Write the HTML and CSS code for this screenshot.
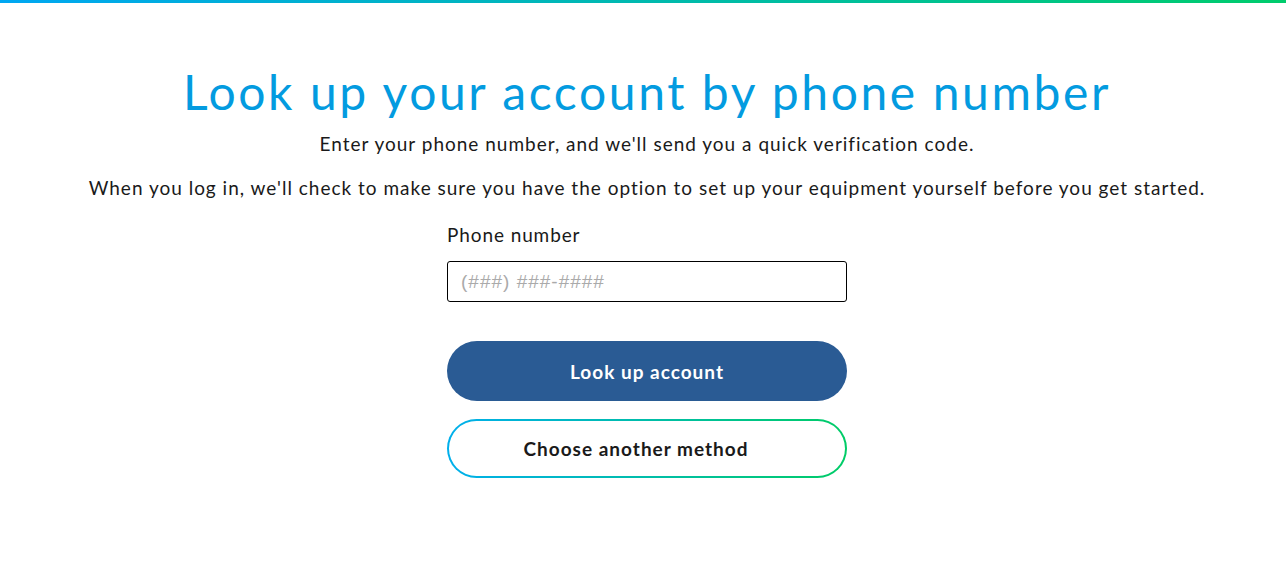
FILE: index.html
```html
<!DOCTYPE html>
<html lang="en">
<head>
    <meta charset="UTF-8">
    <meta name="viewport" content="width=device-width, initial-scale=1.0">
    <title>Look up your account</title>
    <link rel="stylesheet" href="styles.css">
</head>
<body>
    <div class="top-bar"></div>
    <main class="lookup">
        <h1>Look up your account by phone number</h1>
        <p>Enter your phone number, and we'll send you a quick verification code.</p>
        <p>When you log in, we'll check to make sure you have the option to set up your equipment yourself before you get started.</p>
        <form class="lookup-form" onsubmit="return false">
            <label for="phone">Phone number</label>
            <input type="tel" id="phone" name="phone" placeholder="(###) ###-####">
            <button type="submit" class="btn-primary">Look up account</button>
            <button type="button" class="btn-outline"><span>Choose another method</span></button>
        </form>
    </main>
</body>
</html>
```

FILE: styles.css
```css
body {
    margin: 0;
    background-color: #fff;
    color: #1a1a1a;
    font-family: Lato, "Open Sans", sans-serif;
}
.top-bar {
    height: 3px;
    background: linear-gradient(to right, #00a7f2, #00cc6c);
}
.lookup {
    text-align: center;
    padding: 60px 0 0 8px;
}
.lookup h1 {
    margin: 0 0 10px;
    font-size: 48px;
    font-weight: 400;
    letter-spacing: 2.6px;
    color: #039be0;
    line-height: 58px;
}
.lookup p {
    margin: 0 0 18px;
    font-size: 19px;
    letter-spacing: 1px;
    line-height: 26px;
}
.lookup-form {
    width: 400px;
    margin: 22px auto 0;
    text-align: left;
    display: flex;
    flex-direction: column;
}
.lookup-form label {
    font-size: 19px;
    letter-spacing: 0.9px;
    line-height: 24px;
    margin-bottom: 14px;
}
.lookup-form input {
    height: 41px;
    box-sizing: border-box;
    border: 1px solid #000;
    border-radius: 3px;
    padding: 0 13px;
    font-family: "Liberation Sans", Arial, sans-serif;
    font-size: 19px;
    letter-spacing: 1px;
    margin-bottom: 39px;
}
.lookup-form input::placeholder {
    color: #aaa;
}
.btn-primary {
    height: 60px;
    border: none;
    border-radius: 30px;
    background-color: #2a5b94;
    color: #fff;
    font-family: inherit;
    font-size: 19px;
    font-weight: 700;
    letter-spacing: 1px;
    cursor: pointer;
    margin-bottom: 18px;
}
.btn-outline {
    height: 59px;
    padding: 2px;
    border: none;
    border-radius: 30px;
    background: linear-gradient(to right, #00afec, #00cc66);
    font-family: inherit;
    cursor: pointer;
}
.btn-outline span {
    display: flex;
    align-items: center;
    justify-content: center;
    height: 100%;
    padding-right: 22px;
    border-radius: 28px;
    background-color: #fff;
    color: #1a1a1a;
    font-size: 19px;
    font-weight: 700;
    letter-spacing: 1px;
}
```
